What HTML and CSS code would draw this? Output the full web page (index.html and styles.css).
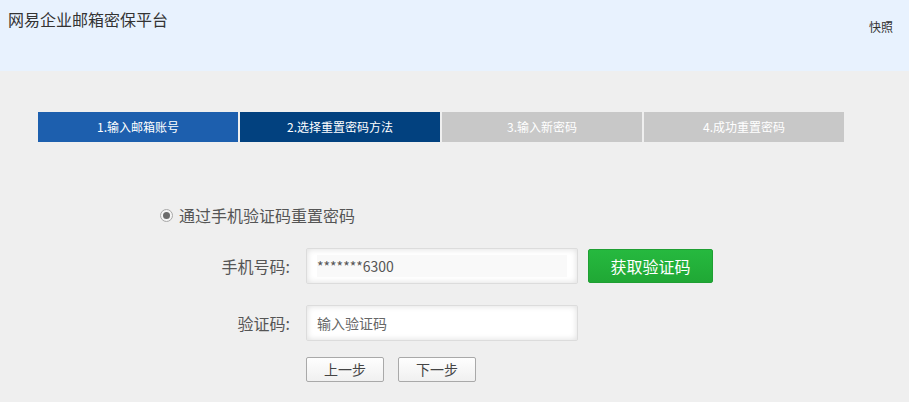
FILE: index.html
```html
<!DOCTYPE html>
<html lang="zh-CN">
<head>
<meta charset="utf-8">
<title>网易企业邮箱密保平台</title>
<link rel="stylesheet" href="styles.css">
</head>
<body>
<header class="header">
  <h1 class="title">网易企业邮箱密保平台</h1>
  <a class="snapshot" href="#">快照</a>
</header>
<main class="main">
  <ol class="steps">
    <li class="step step-done">1.输入邮箱账号</li>
    <li class="step step-current">2.选择重置密码方法</li>
    <li class="step">3.输入新密码</li>
    <li class="step">4.成功重置密码</li>
  </ol>
  <form class="form">
    <label class="method">
      <span class="radio"></span>
      <span>通过手机验证码重置密码</span>
    </label>
    <div class="row row-phone">
      <span class="label">手机号码:</span>
      <div class="field field-phone"><span class="field-inner">*******6300</span></div>
      <button type="button" class="btn-green">获取验证码</button>
    </div>
    <div class="row row-code">
      <span class="label">验证码:</span>
      <div class="field"><span class="field-inner placeholder">输入验证码</span></div>
    </div>
    <div class="actions">
      <button type="button" class="btn">上一步</button>
      <button type="button" class="btn">下一步</button>
    </div>
  </form>
</main>
</body>
</html>
```
FILE: styles.css
```css
* { box-sizing: border-box; }
html, body {
  margin: 0;
  padding: 0;
  background: #efefef;
  font-family: "Noto Sans CJK SC", "Open Sans", sans-serif;
  color: #333;
}
.header {
  height: 71px;
  background: #e8f2fe;
  display: flex;
  justify-content: space-between;
  align-items: flex-start;
  padding: 0 16px 0 8px;
}
.title {
  margin: 7px 0 0;
  font-size: 16px;
  font-weight: normal;
  line-height: 24px;
  color: #333;
}
.snapshot {
  margin-top: 18px;
  font-size: 12px;
  line-height: 18px;
  color: #333;
  text-decoration: none;
}
.main {
  padding-top: 41px;
}
.steps {
  list-style: none;
  margin: 0 0 0 38px;
  padding: 0;
  display: flex;
  gap: 2px;
}
.step {
  width: 200px;
  height: 30px;
  line-height: 30px;
  text-align: center;
  font-size: 12px;
  color: #fff;
  background: #c8c8c8;
}
.step-done { background: #1d5fae; }
.step-current { background: #02417f; }
.form {
  padding: 61px 0 0 160px;
  display: flex;
  flex-direction: column;
}
.method {
  display: flex;
  align-items: center;
  gap: 6px;
  font-size: 16px;
  color: #555;
  height: 24px;
  line-height: 24px;
}
.radio {
  width: 13px;
  height: 13px;
  border-radius: 50%;
  border: 1px solid #a8a8a8;
  background: #f4f4f4;
  display: flex;
  align-items: center;
  justify-content: center;
}
.radio::after {
  content: "";
  width: 7px;
  height: 7px;
  border-radius: 50%;
  background: #6a6a6a;
}
.row {
  display: flex;
  align-items: center;
}
.row-phone { margin-top: 21px; }
.row-code { margin-top: 21px; }
.label {
  width: 131px;
  text-align: right;
  padding-right: 1px;
  font-size: 16px;
  color: #555;
  margin-right: 15px;
}
.field {
  width: 272px;
  height: 36px;
  border: 1px solid #dcdcdc;
  border-radius: 2px;
  background: #fff;
  box-shadow: inset 0 0 6px rgba(0,0,0,0.14);
  padding: 6px 10px;
  display: flex;
  align-items: center;
}
.field-inner {
  flex: 1;
  height: 22px;
  line-height: 22px;
  font-size: 14px;
  color: #555;
}
.field-phone .field-inner { background: #f9f9f9; }
.placeholder { color: #666; }
.btn-green {
  margin-left: 10px;
  width: 125px;
  height: 34px;
  border: 1px solid #1f9f33;
  border-radius: 2px;
  background: linear-gradient(#26b93f, #20a835);
  color: #fff;
  font-family: inherit;
  font-size: 16px;
  padding: 0;
}
.actions {
  margin: 16px 0 0 146px;
  display: flex;
  gap: 14px;
}
.btn {
  width: 78px;
  height: 25px;
  border: 1px solid #a9a9a9;
  border-radius: 2px;
  background: linear-gradient(#fefefe, #f0f0f0);
  color: #444;
  font-family: inherit;
  font-size: 14px;
  padding: 0;
  line-height: 23px;
}
```
